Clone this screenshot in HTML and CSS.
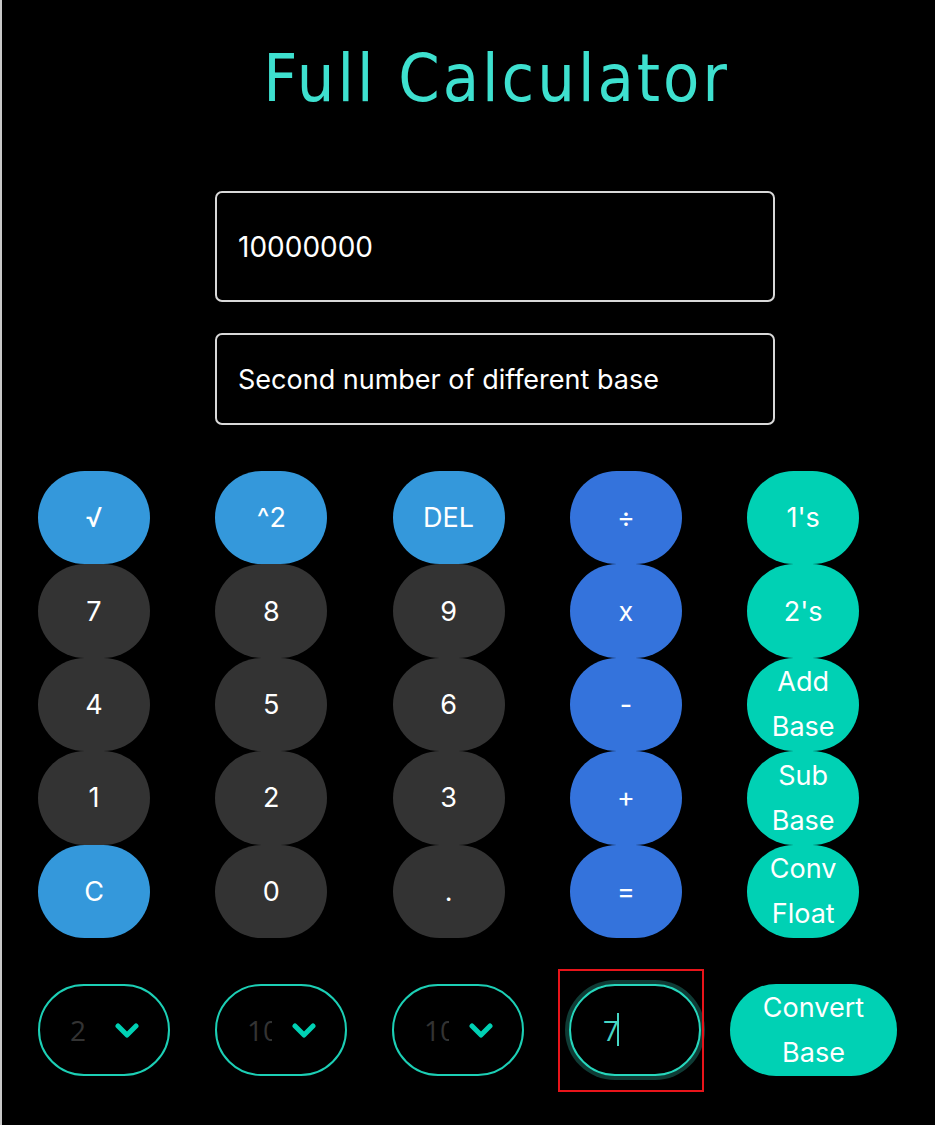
FILE: index.html
```html
<!DOCTYPE html>
<html lang="en">
<head>
<meta charset="utf-8">
<title>Full Calculator</title>
<link rel="stylesheet" href="styles.css">
</head>
<body>
<div class="page">
  <h1 class="title">Full Calculator</h1>

  <div class="fields">
    <div class="field field-main">10000000</div>
    <div class="field field-second">Second number of different base</div>
  </div>

  <div class="keypad">
    <div class="key key-fn">√</div>
    <div class="key key-fn">^2</div>
    <div class="key key-fn">DEL</div>
    <div class="key key-op">÷</div>
    <div class="key key-base">1's</div>

    <div class="key key-num">7</div>
    <div class="key key-num">8</div>
    <div class="key key-num">9</div>
    <div class="key key-op">x</div>
    <div class="key key-base">2's</div>

    <div class="key key-num">4</div>
    <div class="key key-num">5</div>
    <div class="key key-num">6</div>
    <div class="key key-op">-</div>
    <div class="key key-base">Add<br>Base</div>

    <div class="key key-num">1</div>
    <div class="key key-num">2</div>
    <div class="key key-num">3</div>
    <div class="key key-op">+</div>
    <div class="key key-base">Sub<br>Base</div>

    <div class="key key-fn">C</div>
    <div class="key key-num">0</div>
    <div class="key key-num">.</div>
    <div class="key key-op">=</div>
    <div class="key key-base">Conv<br>Float</div>
  </div>

  <div class="convert-row">
    <div class="select">
      <span class="select-value">2</span>
      <svg class="chevron" viewBox="0 0 24 16" width="24" height="16"><path d="M3 3 L12 12 L21 3" fill="none" stroke="#00d1b4" stroke-width="5" stroke-linecap="round" stroke-linejoin="round"/></svg>
    </div>
    <div class="select">
      <span class="select-value">10</span>
      <svg class="chevron" viewBox="0 0 24 16" width="24" height="16"><path d="M3 3 L12 12 L21 3" fill="none" stroke="#00d1b4" stroke-width="5" stroke-linecap="round" stroke-linejoin="round"/></svg>
    </div>
    <div class="select">
      <span class="select-value">10</span>
      <svg class="chevron" viewBox="0 0 24 16" width="24" height="16"><path d="M3 3 L12 12 L21 3" fill="none" stroke="#00d1b4" stroke-width="5" stroke-linecap="round" stroke-linejoin="round"/></svg>
    </div>
    <div class="base-input-wrap">
      <div class="base-input"><span class="base-value">7</span><span class="caret"></span></div>
      <div class="highlight"></div>
    </div>
    <div class="convert-btn">Convert<br>Base</div>
  </div>
</div>
</body>
</html>
```

FILE: styles.css
```css
html, body {
  margin: 0;
  padding: 0;
  background: #000;
}

body {
  font-family: Inter, "Noto Sans", sans-serif;
  color: #fff;
}

.page {
  min-height: 1125px;
  box-sizing: border-box;
  border-left: 2px solid #c8c8c8;
  padding-top: 42px;
}

.title {
  margin: 0;
  padding-left: 56px;
  text-align: center;
  font-family: "DejaVu Sans Condensed", "DejaVu Sans", sans-serif;
  font-weight: normal;
  font-size: 66px;
  line-height: 74px;
  color: #3ee0cf;
  letter-spacing: 3px;
}

.fields {
  width: 560px;
  margin: 75px 0 0 213px;
  display: flex;
  flex-direction: column;
  gap: 31px;
}

.field {
  box-sizing: border-box;
  border: 2px solid #d9d9d9;
  border-radius: 7px;
  padding-left: 21px;
  display: flex;
  align-items: center;
  color: #fff;
}

.field-main {
  height: 111px;
  font-size: 28px;
}

.field-second {
  height: 92px;
  font-size: 27px;
}

.keypad {
  margin: 46px 0 0 36px;
  display: grid;
  grid-template-columns: repeat(5, 112px);
  grid-auto-rows: 93.4px;
  column-gap: 65.3px;
}

.key {
  display: flex;
  align-items: center;
  justify-content: center;
  text-align: center;
  border-radius: 50px;
  font-size: 27px;
  line-height: 45px;
  color: #fff;
}

.key-fn {
  background: #3498db;
}

.key-num {
  background: #333333;
}

.key-op {
  background: #3473dc;
}

.key-base {
  background: #00d1b4;
}

.convert-row {
  margin: 46px 0 0 36px;
  display: flex;
  align-items: center;
  gap: 45px;
}

.select {
  box-sizing: border-box;
  width: 132px;
  height: 92px;
  border: 2px solid #1ccfb5;
  border-radius: 46px;
  display: flex;
  align-items: center;
  padding-left: 30px;
}

.select-value {
  width: 25px;
  overflow: hidden;
  white-space: nowrap;
  font-family: "Open Sans", "Noto Sans", sans-serif;
  font-size: 28px;
  color: #333;
}

.chevron {
  margin-left: 20px;
  margin-top: 2px;
}

.base-input-wrap {
  position: relative;
}

.base-input {
  box-sizing: border-box;
  width: 132px;
  height: 92px;
  border: 2px solid #26d6bc;
  border-radius: 46px;
  box-shadow: 0 0 0 4px #0f3b35;
  display: flex;
  align-items: center;
  padding-left: 32px;
}

.base-value {
  font-family: "Open Sans", "Noto Sans", sans-serif;
  font-size: 28px;
  color: #45d6c4;
}

.caret {
  width: 2px;
  height: 33px;
  background: #45d6c4;
  margin-left: -2px;
}

.highlight {
  position: absolute;
  left: -11px;
  top: -15px;
  width: 146px;
  height: 123px;
  box-sizing: border-box;
  border: 2px solid #e8141a;
}

.convert-btn {
  margin-left: -16px;
  box-sizing: border-box;
  width: 167px;
  height: 92px;
  border-radius: 46px;
  background: #00d1b4;
  display: flex;
  align-items: center;
  justify-content: center;
  text-align: center;
  font-size: 27px;
  line-height: 45px;
  color: #fff;
}
```
